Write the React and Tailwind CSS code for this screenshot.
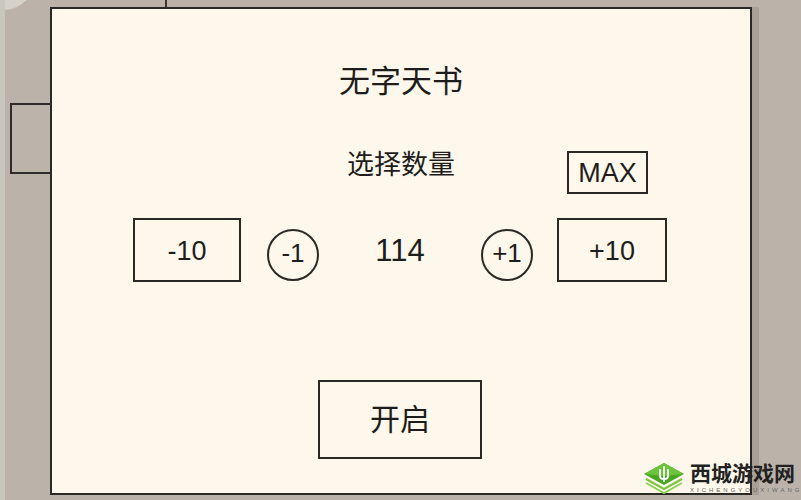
import React, { useState } from 'react';

const cjk = { fontFamily: '"Liberation Sans", "Noto Sans CJK SC", sans-serif' };

const Stamp = () => (
    <svg width="44" height="32" viewBox="0 0 44 32">
        {/* stacked layers */}
        <path d="M4 17 L22 27 L40 17" fill="none" stroke="#7cc243" strokeWidth="2.2" />
        <path d="M4 21 L22 31 L40 21" fill="none" stroke="#8fd054" strokeWidth="2" />
        {/* top diamond */}
        <path d="M22 1 L42 12 L22 23 L2 12 Z" fill="#4aa624" />
        <path d="M22 1 L42 12 L22 14 L2 12 Z" fill="#6cc23a" />
        {/* ear of wheat */}
        <path d="M22 5 V19 M18 8 V14 Q18 17 22 17 M26 8 V14 Q26 17 22 17" fill="none" stroke="#fff" strokeWidth="1.8" strokeLinecap="round" />
    </svg>
);

const App = () => {
    const [count, setCount] = useState(114);
    const max = 999;

    const bump = (d) => setCount(c => Math.max(0, Math.min(max, c + d)));

    return (
        <div className="relative w-[801px] h-[500px] overflow-hidden bg-[#bbb3aa]" style={cjk}>
            {/* scenery behind the dialog */}
            <div className="absolute left-[-30px] top-[-56px] w-[66px] h-[66px] rounded-full bg-[#d6d2ca]" />
            <div className="absolute left-[165px] top-0 w-[2px] h-[8px] bg-[#3a3632]" />
            <div className="absolute left-[10px] top-[103px] w-[44px] h-[71px] border-2 border-[#2e2b28] bg-[#bcb4ab]" />
            <div className="absolute left-0 top-0 w-[5px] h-full bg-[#c9c6bd]" />

            <div className="relative pt-[7px] pl-[50px]">
                <div className="w-[702px] h-[488px] bg-[#fdf8eb] border-2 border-[#2b2926] shadow-[7px_0_0_#a9a197] flex flex-col text-[#1f1d1b]">
                    <h3 className="mt-[53px] h-10 leading-10 text-center text-[31px]">无字天书</h3>

                    <div className="mt-[45px] flex items-start">
                        <div className="ml-[293px] w-[112px] leading-[36px] text-[27px] text-center">选择数量</div>
                        <button onClick={() => setCount(max)} className="ml-[110px] mt-[4px] w-[81px] h-[43px] border-2 border-[#2b2926] text-[27px] leading-none pt-[2px] bg-transparent">MAX</button>
                    </div>

                    <div className="mt-[24px] flex items-start">
                        <button onClick={() => bump(-10)} className="ml-[81px] w-[108px] h-[64px] border-2 border-[#2b2926] text-[27px] pt-[3px]">-10</button>
                        <button onClick={() => bump(-1)} className="ml-[26px] mt-[11px] w-[52px] h-[52px] rounded-full border-2 border-[#2b2926] text-[26px] leading-none pb-[4px]">-1</button>
                        <div className="w-[162px] h-[64px] leading-[66px] text-center text-[31px]">{count}</div>
                        <button onClick={() => bump(1)} className="mt-[11px] w-[52px] h-[52px] rounded-full border-2 border-[#2b2926] text-[26px] leading-none pb-[4px]">+1</button>
                        <button onClick={() => bump(10)} className="ml-[24px] w-[110px] h-[64px] border-2 border-[#2b2926] text-[27px] pt-[3px]">+10</button>
                    </div>

                    <button className="mt-[98px] ml-[266px] w-[164px] h-[79px] border-2 border-[#2b2926] text-[30px]">开启</button>
                </div>
            </div>

            {/* site badge */}
            <div className="absolute left-[642px] top-[462px] flex items-start">
                <Stamp />
                <div className="ml-[4px] flex flex-col">
                    <span className="text-[21px] leading-[24px] font-bold text-[#222]">西城游戏网</span>
                    <span className="mt-[1px] text-[6px] leading-[7px] tracking-[3px] text-[#666]">XICHENGYOUXIWANG</span>
                </div>
            </div>
        </div>
    );
};

export default App;
